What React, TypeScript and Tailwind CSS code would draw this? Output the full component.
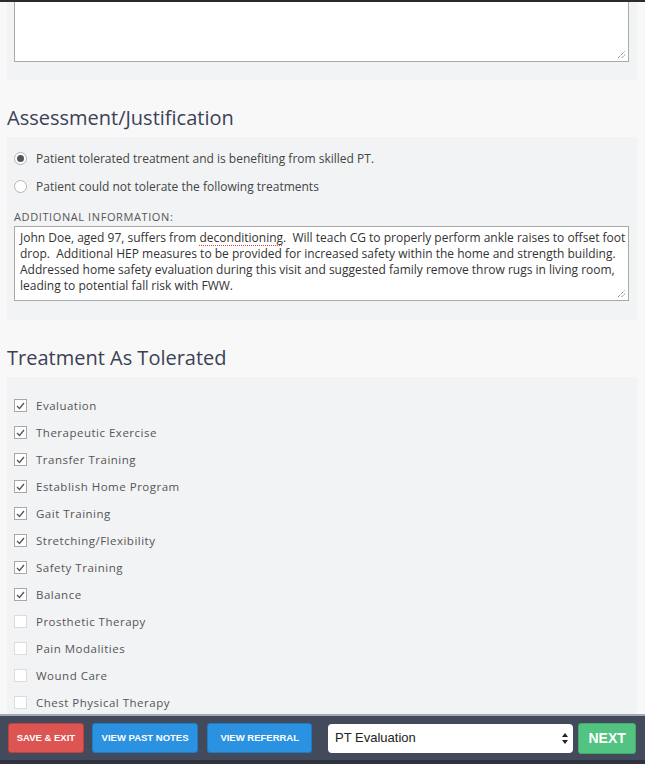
import React from 'react';

const treatments = [
  { label: 'Evaluation', checked: true },
  { label: 'Therapeutic Exercise', checked: true },
  { label: 'Transfer Training', checked: true },
  { label: 'Establish Home Program', checked: true },
  { label: 'Gait Training', checked: true },
  { label: 'Stretching/Flexibility', checked: true },
  { label: 'Safety Training', checked: true },
  { label: 'Balance', checked: true },
  { label: 'Prosthetic Therapy', checked: false },
  { label: 'Pain Modalities', checked: false },
  { label: 'Wound Care', checked: false },
  { label: 'Chest Physical Therapy', checked: false },
];

const openSans = "font-['Open_Sans','Noto_Sans',sans-serif]";
const arial = "font-['Liberation_Sans',Arial,sans-serif]";

function Grip() {
  return (
    <svg className="absolute right-[2px] bottom-[2px]" width="9" height="9" viewBox="0 0 9 9">
      <path d="M1 8 L8 1 M4.5 8 L8 4.5" stroke="#555" strokeWidth="1" strokeDasharray="1 1" />
    </svg>
  );
}

function Radio({ selected }: { selected?: boolean }) {
  return (
    <span className="w-[13px] h-[13px] rounded-full border border-[#b5b5b5] bg-white flex items-center justify-center shrink-0">
      {selected && <span className="w-[7px] h-[7px] rounded-full bg-[#555]" />}
    </span>
  );
}

function Checkbox({ checked }: { checked: boolean }) {
  return (
    <span
      className={`w-[13px] h-[13px] border bg-white flex items-center justify-center shrink-0 ${
        checked ? 'border-[#a8a8a8]' : 'border-[#dcdcdc]'
      }`}
    >
      {checked && (
        <svg width="9" height="8" viewBox="0 0 9 8">
          <path d="M1 4 L3.5 6.5 L8 1" fill="none" stroke="#555" strokeWidth="1.3" />
        </svg>
      )}
    </span>
  );
}

export default function App() {
  return (
    <div className={`h-[764px] w-[645px] flex flex-col overflow-hidden bg-[#f8f8f9] ${openSans}`}>
      <div className="h-[2px] bg-[#2b2b2b] shrink-0" />

      <div className="flex-1 overflow-hidden">
        <div className="-mt-[60px]">
          {/* previous section panel */}
          <div className="mx-[7px] w-[630px] bg-[#f2f3f5] pl-[7px] pr-[8px] pt-[10px] pb-[18px]">
            <div className="relative h-[110px] border border-[#a9a9a9] bg-white">
              <Grip />
            </div>
          </div>

          <h2 className="mt-[24px] mb-[5px] px-[7px] text-[20px] leading-[28px] text-[#3b4256]">
            Assessment/Justification
          </h2>

          <div className="mx-[7px] w-[630px] bg-[#f2f3f5] pl-[7px] pr-[8px] pt-[15px] pb-[19px]">
            <div className="flex flex-col gap-[15px] text-[12px] leading-[13px] text-[#444]">
              <label className="flex items-center gap-[9px]">
                <Radio selected />
                <span>Patient tolerated treatment and is benefiting from skilled PT.</span>
              </label>
              <label className="flex items-center gap-[9px]">
                <Radio />
                <span>Patient could not tolerate the following treatments</span>
              </label>
            </div>
            <div className="mt-[17px] mb-[2px] text-[11px] leading-[14px] tracking-[0.6px] uppercase text-[#555]">
              Additional Information:
            </div>
            <div className="relative h-[75px] border border-[#a9a9a9] bg-white px-[5px] pt-[3px] text-[12px] leading-[16px] text-[#333] whitespace-pre">
              <div>
                John Doe, aged 97, suffers from{' '}
                <span className="underline decoration-dotted decoration-[#e0403a] underline-offset-[3px]">deconditioning</span>
                {'.  Will teach CG to properly perform ankle raises to offset foot'}
              </div>
              <div>{'drop.  Additional HEP measures to be provided for increased safety within the home and strength building.'}</div>
              <div>Addressed home safety evaluation during this visit and suggested family remove throw rugs in living room,</div>
              <div>leading to potential fall risk with FWW.</div>
              <Grip />
            </div>
          </div>

          <h2 className="mt-[24px] mb-[5px] px-[7px] text-[20px] leading-[28px] text-[#3b4256]">
            Treatment As Tolerated
          </h2>

          <div className="mx-[7px] w-[630px] bg-[#f2f3f5] pl-[7px] pr-[8px] pt-[22px] pb-[20px]">
            <div className="flex flex-col gap-[14px]">
              {treatments.map((t) => (
                <label key={t.label} className="flex items-center gap-[9px] h-[13px]">
                  <Checkbox checked={t.checked} />
                  <span className="text-[11.5px] tracking-[0.5px] text-[#555]">{t.label}</span>
                </label>
              ))}
            </div>
          </div>
        </div>
      </div>

      <div className="shrink-0 border-t-2 border-[#a4a8b2] bg-[#434a5c]">
        <div className={`h-[44px] flex items-center pl-[8px] pr-[9px] ${arial}`}>
          <button className="h-[30px] w-[76px] rounded-[3px] border border-[#c0403c] bg-[#dc5553] text-white text-[9.5px] font-bold whitespace-nowrap">
            SAVE &amp; EXIT
          </button>
          <button className="ml-[8px] h-[30px] w-[107px] rounded-[3px] border border-[#1e7cc4] bg-[#2a92e0] text-white text-[9.5px] font-bold whitespace-nowrap">
            VIEW PAST NOTES
          </button>
          <button className="ml-[9px] h-[30px] w-[105px] rounded-[3px] border border-[#1e7cc4] bg-[#2a92e0] text-white text-[9.5px] font-bold whitespace-nowrap">
            VIEW REFERRAL
          </button>
          <div className="ml-[16px] relative h-[29px] w-[246px] rounded-[4px] bg-white flex items-center pl-[7px] text-[13px] text-[#222]">
            PT Evaluation
            <svg className="absolute right-[5px] top-[9px]" width="6" height="11" viewBox="0 0 6 11">
              <path d="M3 0 L6 4 L0 4 Z M0 7 L6 7 L3 11 Z" fill="#222" />
            </svg>
          </div>
          <button className="ml-[5px] h-[31px] w-[58px] rounded-[3px] border border-[#42ad6b] bg-[#52c381] text-white text-[14px] font-bold">
            NEXT
          </button>
        </div>
        <div className="h-[4px] bg-[#2f3340]" />
      </div>
    </div>
  );
}
